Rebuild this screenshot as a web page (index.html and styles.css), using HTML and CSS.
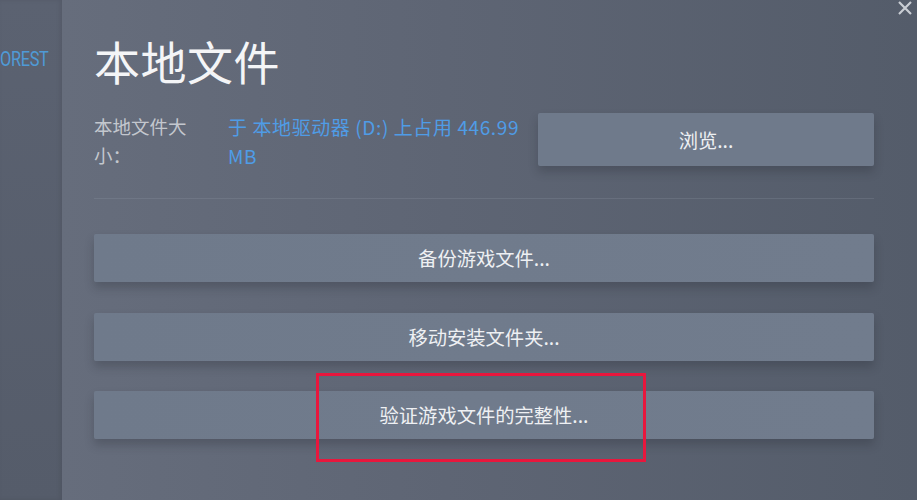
FILE: index.html
```html
<!DOCTYPE html>
<html lang="zh-CN">
<head>
<meta charset="utf-8">
<title>本地文件</title>
<link rel="stylesheet" href="styles.css">
</head>
<body>
<div class="window">
  <aside class="sidebar">
    <div class="nav-item">OREST</div>
  </aside>
  <main class="panel">
    <h1 class="title">本地文件</h1>
    <div class="info-row">
      <div class="label">本地文件大小：</div>
      <div class="value">于 本地驱动器 (D:) 上占用 446.99 MB</div>
      <button class="btn browse">浏览...</button>
    </div>
    <div class="separator"></div>
    <div class="actions">
      <button class="btn action">备份游戏文件...</button>
      <button class="btn action">移动安装文件夹...</button>
      <button class="btn action">验证游戏文件的完整性...</button>
    </div>
  </main>
  <div class="close">
    <svg width="16" height="16" viewBox="0 0 16 16"><path d="M2 1 L14 13 M14 1 L2 13" stroke="#c9cdd4" stroke-width="2.2" fill="none"/></svg>
  </div>
  <div class="highlight"></div>
</div>
</body>
</html>
```

FILE: styles.css
```css
* { box-sizing: border-box; }
html, body {
  margin: 0;
  padding: 0;
  width: 917px;
  height: 500px;
  overflow: hidden;
}
body {
  font-family: "Noto Sans CJK SC", "Noto Sans", sans-serif;
  background: #555c6a;
}
.window {
  position: relative;
  display: flex;
  width: 917px;
  height: 500px;
}
.sidebar {
  width: 62px;
  flex: none;
  background: linear-gradient(to bottom, #5b6271, #555c6a);
  box-shadow: inset -2px 0 4px rgba(0,0,0,0.08);
  padding-top: 48px;
}
.nav-item {
  font-family: Roboto, "Liberation Sans", sans-serif;
  font-size: 19.5px;
  letter-spacing: -0.4px;
  color: #4f9ad6;
  line-height: 24px;
  transform: scaleX(0.84);
  transform-origin: left center;
}
.panel {
  flex: 1;
  background: linear-gradient(to right, #666d7c 0%, #5e6574 45%, #545c6a 100%);
  padding: 32px 43px 0 32px;
}
.title {
  margin: 0;
  font-size: 46px;
  line-height: 56px;
  font-weight: 400;
  color: #f4f5f7;
  letter-spacing: 0.5px;
}
.info-row {
  margin-top: 25px;
  display: flex;
  align-items: flex-start;
}
.label {
  width: 134px;
  flex: none;
  padding-right: 30px;
  font-size: 18.5px;
  line-height: 29px;
  color: #c3c7ce;
  margin-top: -1px;
}
.value {
  width: 310px;
  flex: none;
  font-size: 19px;
  letter-spacing: 0.6px;
  line-height: 29px;
  color: #4f9ce6;
  margin-top: -1px;
  padding-right: 8px;
}
.btn {
  font-family: "Noto Sans CJK SC", "Noto Sans", sans-serif;
  border: none;
  border-radius: 2px;
  background: #6f7a8b;
  color: #eef0f3;
  font-size: 19.3px;
  padding: 0;
  cursor: pointer;
  box-shadow: 0 6px 10px rgba(30,35,45,0.25);
}
.browse {
  flex: 1;
  height: 53px;
}
.separator {
  margin-top: 28px;
  height: 1px;
  background: rgba(150,158,172,0.22);
}
.actions {
  margin-top: 35px;
  display: flex;
  flex-direction: column;
  gap: 30.5px;
}
.action {
  height: 48px;
  width: 100%;
  background: linear-gradient(to right, #6f7a8b, #717c8d);
}
.close {
  position: absolute;
  top: -2px;
  right: 4px;
  width: 16px;
  height: 16px;
}
.highlight {
  position: absolute;
  left: 316px;
  top: 373px;
  width: 330px;
  height: 89px;
  border: 3px solid #e8173d;
  pointer-events: none;
}
```
